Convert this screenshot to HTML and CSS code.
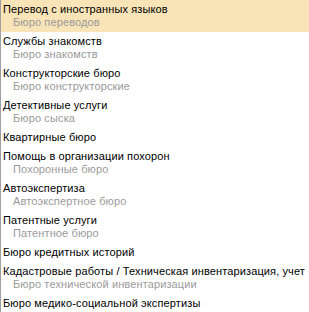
FILE: index.html
```html
<!DOCTYPE html>
<html lang="ru">
    <head>
        <title>Бюро</title>
        <meta charset="utf-8">
        <link rel="stylesheet" href="styles.css">
    </head>
    <body>
        <ul class="lista">
            <li class="item ativo">
                <div class="titulo">Перевод с иностранных языков</div>
                <div class="sub">Бюро переводов</div>
            </li>
            <li class="item">
                <div class="titulo">Службы знакомств</div>
                <div class="sub">Бюро знакомств</div>
            </li>
            <li class="item">
                <div class="titulo">Конструкторские бюро</div>
                <div class="sub">Бюро конструкторские</div>
            </li>
            <li class="item">
                <div class="titulo">Детективные услуги</div>
                <div class="sub">Бюро сыска</div>
            </li>
            <li class="item">
                <div class="titulo">Квартирные бюро</div>
            </li>
            <li class="item">
                <div class="titulo">Помощь в организации похорон</div>
                <div class="sub">Похоронные бюро</div>
            </li>
            <li class="item">
                <div class="titulo">Автоэкспертиза</div>
                <div class="sub">Автоэкспертное бюро</div>
            </li>
            <li class="item">
                <div class="titulo">Патентные услуги</div>
                <div class="sub">Патентное бюро</div>
            </li>
            <li class="item">
                <div class="titulo">Бюро кредитных историй</div>
            </li>
            <li class="item">
                <div class="titulo">Кадастровые работы / Техническая инвентаризация, учет</div>
                <div class="sub">Бюро технической инвентаризации</div>
            </li>
            <li class="item">
                <div class="titulo">Бюро медико-социальной экспертизы</div>
            </li>
        </ul>
    </body>
</html>
```

FILE: styles.css
```css
* {
    font-family: "Liberation Sans", Arial, sans-serif;
}
body {
    margin: 0px;
    padding: 0px;
    background: #ffffff;
}
.lista {
    list-style: none;
    margin: 0px;
    padding: 0px;
    border-left: solid 1px #a0a0a0;
    height: 312px;
    overflow: hidden;
}
.item {
    padding: 3px 0px 3px 2px;
}
.ativo {
    background: #f9e4b7;
}
.titulo {
    font-size: 11px;
    line-height: 13px;
    letter-spacing: 0.12px;
    color: #000000;
    white-space: nowrap;
}
.sub {
    font-size: 11px;
    line-height: 13px;
    letter-spacing: 0.12px;
    color: #9a9a9a;
    margin-left: 10px;
    white-space: nowrap;
}
```
